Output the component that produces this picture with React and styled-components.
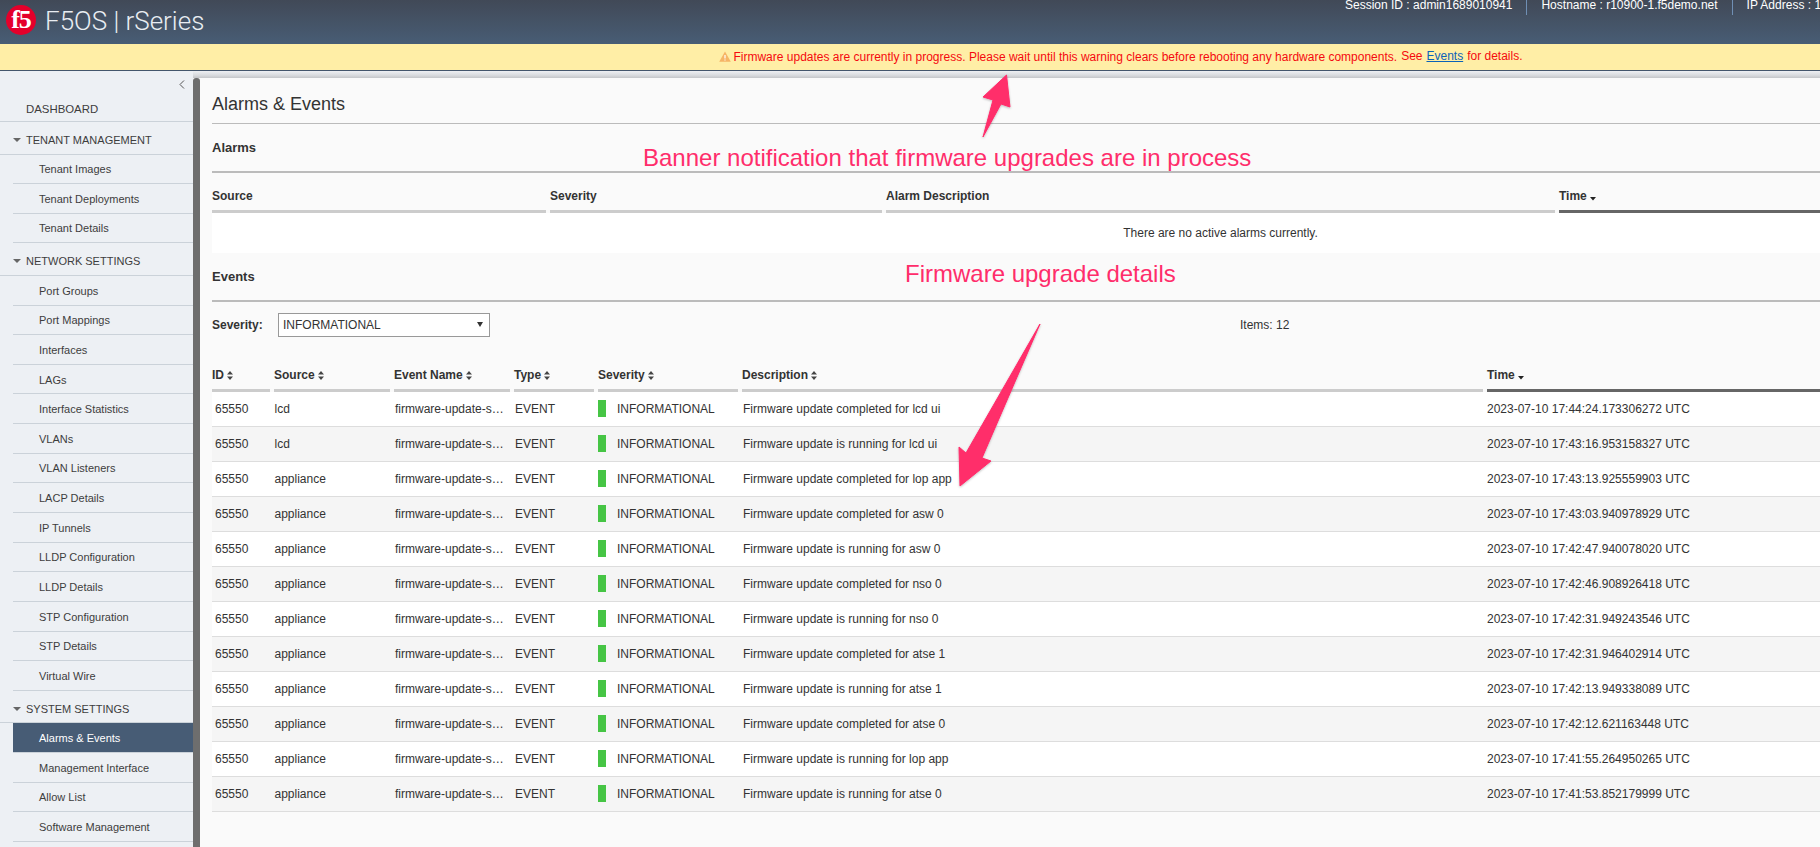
import React from "react";
import styled, { createGlobalStyle } from "styled-components";

const Global = createGlobalStyle`
  html, body { margin: 0; padding: 0; height: 100%; overflow: hidden; background: #fafafa; }
  body { font-family: "Liberation Sans", Arial, sans-serif; font-size: 12px; color: #333; }
  * { box-sizing: border-box; }
`;

const Page = styled.div`
  position: relative;
  display: flex;
  flex-direction: column;
  width: 1820px;
  height: 847px;
  overflow: hidden;
`;
const Header = styled.header`
  display: flex;
  height: 44px;
  flex: none;
  background: linear-gradient(180deg, #414957 0%, #485d75 100%);
  color: #fff;
`;
const Brand = styled.div`
  display: flex;
  align-items: center;
  padding-left: 6px;
  height: 40px;
`;
const BrandName = styled.span`
  margin-left: 9px;
  padding-top: 1px;
  font-family: Roboto, sans-serif;
  font-size: 26px;
  font-weight: 300;
  color: #e9edf2;
  white-space: nowrap;
`;
const HeaderInfo = styled.div`
  display: flex;
  margin-left: auto;
  width: 475px;
  overflow: hidden;
  white-space: nowrap;
`;
const InfoItem = styled.div`
  height: 15px;
  line-height: 10px;
  padding: 0 14px;
  border-right: 1px solid #6f8fb4;
  font-size: 12px;
  flex: none;
  &:first-child { padding-left: 0; }
  &:last-child { border-right: 0; padding-right: 0; }
`;
const Banner = styled.div`
  display: flex;
  flex: none;
  align-items: center;
  justify-content: center;
  gap: 4px;
  height: 27px;
  padding: 0 0 2px 422px;
  background: #ffeea6;
  border-bottom: 1px solid #44566c;
  color: #f5090f;
  font-size: 12px;
  white-space: nowrap;
`;
const WarnIcon = styled.svg`
  width: 12px;
  height: 11px;
  flex: none;
  margin-right: -2px;
`;
const BannerLead = styled.span`
  padding-top: 1px;
`;
const BannerLink = styled.a`
  color: #0b62b8;
  text-decoration: underline;
  margin: 0 4px;
`;
const Body = styled.div`
  display: flex;
  flex: 1;
  min-height: 0;
`;
const Sidebar = styled.nav`
  width: 193px;
  flex: none;
  background: #edf0f4;
  color: #3d3d3d;
  font-size: 11px;
  overflow: hidden;
`;
const Collapse = styled.div`
  display: flex;
  justify-content: flex-end;
  height: 21px;
  padding: 9px 8px 0 0;
`;
const DashRow = styled.div`
  height: 30px;
  padding: 11px 0 0 26px;
  line-height: 13px;
  font-size: 11.4px;
  border-bottom: 1px solid #cbd2d9;
`;
const SectionRow = styled.div`
  position: relative;
  height: 32.5px;
  padding: 12px 0 0 26px;
  line-height: 13px;
  border-bottom: 1px solid #cbd2d9;
  &::before {
    content: "";
    position: absolute;
    left: 13px;
    top: 16px;
    border-left: 4px solid transparent;
    border-right: 4px solid transparent;
    border-top: 4.5px solid #666;
  }
`;
const ItemRow = styled.div`
  height: 29.65px;
  margin-left: 13px;
  padding: 8.7px 0 0 26px;
  line-height: 12px;
  border-bottom: 1px solid #cbd2d9;
  background: ${(p) => (p.$active ? "#475c75" : "transparent")};
  color: ${(p) => (p.$active ? "#fff" : "inherit")};
`;
const ContentColumn = styled.div`
  flex: 1;
  min-width: 0;
  display: flex;
  flex-direction: column;
`;
const TopShade = styled.div`
  height: 7px;
  flex: none;
  background: linear-gradient(180deg, #eef0f3 0%, #d9dbde 60%, #c4c6c9 100%);
`;
const ContentRow = styled.div`
  flex: 1;
  display: flex;
  min-height: 0;
`;
const ScrollBar = styled.div`
  width: 7px;
  flex: none;
  background: #6e6e6e;
  border-radius: 3px 3px 0 0;
`;
const Main = styled.main`
  flex: 1;
  min-width: 0;
  padding-left: 12px;
  background: #fafafa;
  overflow: hidden;
`;
const Title = styled.h1`
  margin: 0;
  height: 46px;
  padding-top: 15px;
  font-size: 18px;
  line-height: 22px;
  font-weight: 400;
  color: #333;
  border-bottom: 1px solid #bbb;
`;
const SectionTitle = styled.h2`
  margin: 0;
  height: 49px;
  padding-top: 16px;
  font-size: 13px;
  line-height: 16px;
  font-weight: 700;
  color: #333;
  border-bottom: 2px solid #bbb;
`;
const TableHead = styled.div`
  display: grid;
  grid-template-columns: ${(p) => p.$cols};
  column-gap: 4px;
  height: ${(p) => p.$h}px;
`;
const HeadCell = styled.div`
  display: flex;
  align-items: flex-start;
  gap: 3px;
  padding-top: ${(p) => p.$pt}px;
  font-weight: 700;
  line-height: 14px;
  color: #333;
  border-bottom: 3px solid ${(p) => (p.$sorted ? "#666" : "#ccc")};
  white-space: nowrap;
`;
const SortGlyph = styled.svg`
  width: 6px;
  height: 9px;
  margin-top: 3px;
  flex: none;
`;
const EmptyRow = styled.div`
  height: 40px;
  padding-left: 409px;
  background: #fff;
  line-height: 40px;
  text-align: center;
`;
const FilterBar = styled.div`
  display: flex;
  align-items: center;
  height: 24px;
  margin-top: 11px;
`;
const FilterLabel = styled.span`
  width: 66px;
  font-weight: 700;
`;
const FakeSelect = styled.div`
  position: relative;
  width: 212px;
  height: 24px;
  padding-left: 4px;
  line-height: 22px;
  background: #fff;
  border: 1px solid #999;
  color: #333;
  &::after {
    content: "";
    position: absolute;
    right: 6px;
    top: 8px;
    border-left: 3px solid transparent;
    border-right: 3px solid transparent;
    border-top: 5px solid #333;
  }
`;
const ItemsCount = styled.span`
  margin-left: 750px;
`;
const TableRow = styled.div`
  display: grid;
  grid-template-columns: ${(p) => p.$cols};
  column-gap: 4px;
  height: 35px;
  background: ${(p) => (p.$alt ? "#f5f5f5" : "#fff")};
  border-bottom: 1px solid #ddd;
  line-height: 34px;
  white-space: nowrap;
`;
const Cell = styled.div`
  padding-left: ${(p) => p.$pl ?? 1}px;
  overflow: hidden;
`;
const SeverityCell = styled.div`
  display: flex;
  align-items: center;
  gap: 11px;
`;
const SeverityBar = styled.span`
  width: 8px;
  height: 17px;
  background: #46c545;
  margin-top: -1px;
`;
const Note = styled.div`
  position: absolute;
  left: ${(p) => p.$x}px;
  top: ${(p) => p.$y}px;
  color: #ff2d6b;
  font-size: 24px;
  line-height: 28px;
  white-space: nowrap;
`;
const Arrows = styled.svg`
  position: absolute;
  left: 0;
  top: 0;
  width: 1820px;
  height: 847px;
  pointer-events: none;
`;

const Sort = () => (
  <SortGlyph viewBox="0 0 6 9">
    <path d="M3 0l3 3.6H0zM3 9L0 5.4h6z" fill="#444" />
  </SortGlyph>
);
const SortDown = () => (
  <SortGlyph viewBox="0 0 6 9">
    <path d="M0 5h6L3 8.5z" fill="#222" />
  </SortGlyph>
);

const nav = [
  ["s", "TENANT MANAGEMENT"],
  ["i", "Tenant Images"], ["i", "Tenant Deployments"], ["i", "Tenant Details"],
  ["s", "NETWORK SETTINGS"],
  ["i", "Port Groups"], ["i", "Port Mappings"], ["i", "Interfaces"], ["i", "LAGs"],
  ["i", "Interface Statistics"], ["i", "VLANs"], ["i", "VLAN Listeners"], ["i", "LACP Details"],
  ["i", "IP Tunnels"], ["i", "LLDP Configuration"], ["i", "LLDP Details"], ["i", "STP Configuration"],
  ["i", "STP Details"], ["i", "Virtual Wire"],
  ["s", "SYSTEM SETTINGS"],
  ["a", "Alarms & Events"], ["i", "Management Interface"], ["i", "Allow List"], ["i", "Software Management"],
];

const alarmCols = "334px 332px 669px 1fr";
const eventCols = "58px 116px 116px 80px 140px 741px 1fr";

const events = [
  ["lcd", "Firmware update completed for lcd ui", "2023-07-10 17:44:24.173306272 UTC"],
  ["lcd", "Firmware update is running for lcd ui", "2023-07-10 17:43:16.953158327 UTC"],
  ["appliance", "Firmware update completed for lop app", "2023-07-10 17:43:13.925559903 UTC"],
  ["appliance", "Firmware update completed for asw 0", "2023-07-10 17:43:03.940978929 UTC"],
  ["appliance", "Firmware update is running for asw 0", "2023-07-10 17:42:47.940078020 UTC"],
  ["appliance", "Firmware update completed for nso 0", "2023-07-10 17:42:46.908926418 UTC"],
  ["appliance", "Firmware update is running for nso 0", "2023-07-10 17:42:31.949243546 UTC"],
  ["appliance", "Firmware update completed for atse 1", "2023-07-10 17:42:31.946402914 UTC"],
  ["appliance", "Firmware update is running for atse 1", "2023-07-10 17:42:13.949338089 UTC"],
  ["appliance", "Firmware update completed for atse 0", "2023-07-10 17:42:12.621163448 UTC"],
  ["appliance", "Firmware update is running for lop app", "2023-07-10 17:41:55.264950265 UTC"],
  ["appliance", "Firmware update is running for atse 0", "2023-07-10 17:41:53.852179999 UTC"],
];

export default function App() {
  return (
    <Page>
      <Global />
      <Header>
        <Brand>
          <svg width="30" height="30" viewBox="0 0 30 30">
            <circle cx="15" cy="15" r="15" fill="#e4002b" />
            <text x="15" y="23" textAnchor="middle" fontFamily="'Liberation Serif', serif" fontWeight="700" fontSize="26" fill="#fff" letterSpacing="-1">f5</text>
          </svg>
          <BrandName>F5OS | rSeries</BrandName>
        </Brand>
        <HeaderInfo>
          <InfoItem>Session ID : admin1689010941</InfoItem>
          <InfoItem>Hostname : r10900-1.f5demo.net</InfoItem>
          <InfoItem>IP Address : 1</InfoItem>
        </HeaderInfo>
      </Header>
      <Banner>
        <WarnIcon viewBox="0 0 12 11">
          <path d="M6 .5L11.8 10.8H.2z" fill="#f6b566" />
          <path d="M5.4 4h1.2v3.6H5.4zM5.4 8.4h1.2v1.2H5.4z" fill="#fff" />
        </WarnIcon>
        <BannerLead>Firmware updates are currently in progress. Please wait until this warning clears before rebooting any hardware components.</BannerLead>
        <span>See<BannerLink>Events</BannerLink>for details.</span>
      </Banner>
      <Body>
        <Sidebar>
          <Collapse>
            <svg width="6" height="9" viewBox="0 0 6 9">
              <path d="M5 .5L1 4.5l4 4" fill="none" stroke="#555" strokeWidth="1" />
            </svg>
          </Collapse>
          <DashRow>DASHBOARD</DashRow>
          {nav.map(([kind, label]) =>
            kind === "s" ? (
              <SectionRow key={label}>{label}</SectionRow>
            ) : (
              <ItemRow key={label} $active={kind === "a"}>{label}</ItemRow>
            )
          )}
        </Sidebar>
        <ContentColumn>
          <TopShade />
          <ContentRow>
            <ScrollBar />
            <Main>
              <Title>Alarms &amp; Events</Title>
              <SectionTitle>Alarms</SectionTitle>
              <TableHead $cols={alarmCols} $h={40}>
                <HeadCell $pt={16}>Source</HeadCell>
                <HeadCell $pt={16}>Severity</HeadCell>
                <HeadCell $pt={16}>Alarm Description</HeadCell>
                <HeadCell $pt={16} $sorted>Time <SortDown /></HeadCell>
              </TableHead>
              <EmptyRow>There are no active alarms currently.</EmptyRow>
              <SectionTitle>Events</SectionTitle>
              <FilterBar>
                <FilterLabel>Severity:</FilterLabel>
                <FakeSelect>INFORMATIONAL</FakeSelect>
                <ItemsCount>Items: 12</ItemsCount>
              </FilterBar>
              <TableHead $cols={eventCols} $h={55}>
                <HeadCell $pt={31}>ID <Sort /></HeadCell>
                <HeadCell $pt={31}>Source <Sort /></HeadCell>
                <HeadCell $pt={31}>Event Name <Sort /></HeadCell>
                <HeadCell $pt={31}>Type <Sort /></HeadCell>
                <HeadCell $pt={31}>Severity <Sort /></HeadCell>
                <HeadCell $pt={31}>Description <Sort /></HeadCell>
                <HeadCell $pt={31} $sorted>Time <SortDown /></HeadCell>
              </TableHead>
              {events.map(([source, desc, time], i) => (
                <TableRow key={time} $cols={eventCols} $alt={i % 2 === 1}>
                  <Cell $pl={3}>65550</Cell>
                  <Cell $pl={0.5}>{source}</Cell>
                  <Cell>firmware-update-s…</Cell>
                  <Cell>EVENT</Cell>
                  <SeverityCell>
                    <SeverityBar />
                    <span>INFORMATIONAL</span>
                  </SeverityCell>
                  <Cell>{desc}</Cell>
                  <Cell $pl={0}>{time}</Cell>
                </TableRow>
              ))}
            </Main>
          </ContentRow>
        </ContentColumn>
      </Body>
      <Note $x={643} $y={144}>Banner notification that firmware upgrades are in process</Note>
      <Note $x={905} $y={260}>Firmware upgrade details</Note>
      <Arrows viewBox="0 0 1820 847">
        <defs>
          <filter id="arrowShadow" x="-20%" y="-20%" width="140%" height="140%">
            <feDropShadow dx="0" dy="1" stdDeviation="1" floodColor="#000" floodOpacity="0.25" />
          </filter>
        </defs>
        <g fill="#ff2d6b" filter="url(#arrowShadow)" stroke="#ff2d6b" strokeWidth="1" strokeLinejoin="round">
          <path d="M983 137L993 100L983 97L1006.5 75L1010 107L1001 104Z" />
          <path d="M1040 324L966 453L959 447L960 486L991 461L982 458Z" />
        </g>
      </Arrows>
    </Page>
  );
}
